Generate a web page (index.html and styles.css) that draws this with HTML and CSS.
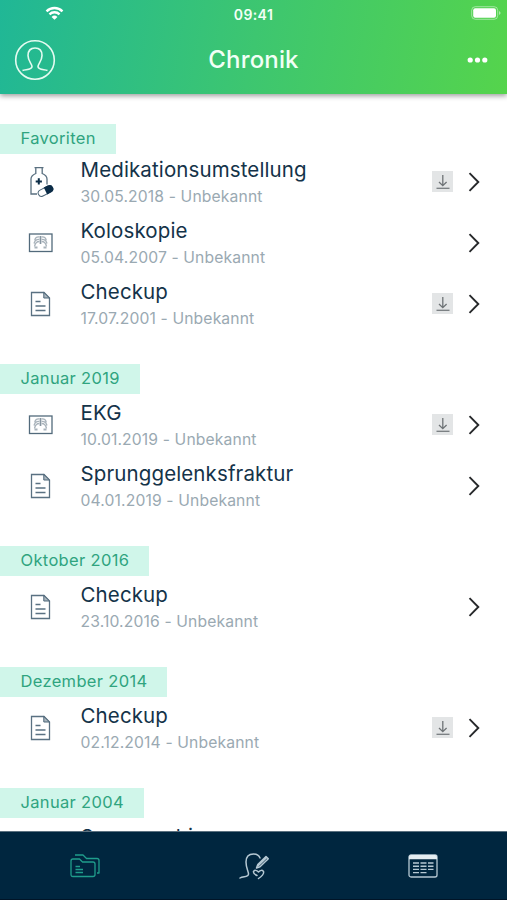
FILE: index.html
```
<!DOCTYPE html>
<html lang="de">
<head>
<meta charset="utf-8">
<title>Chronik</title>
<link rel="stylesheet" href="styles.css">
</head>
<body>
<svg class="defs" width="0" height="0" aria-hidden="true">
  <symbol id="doc" viewBox="0 0 28 32">
    <path d="M5.500 4.500H18L23.500 10V27.500H5.500Z M9.500 13.500H14.500 M9.500 18H19.500 M9.500 22.500H19.500" fill="none" stroke="#5a7182" stroke-width="1.300"/>
    <path d="M17.800 4.500V10H23.500Z" fill="#aab6be" stroke="#4d6678"/>
  </symbol>
  <symbol id="xray" viewBox="0 0 28 32">
    <rect x="3.500" y="7" width="22.500" height="17.500" fill="none" stroke="#526a7b" stroke-width="1.300"/>
    <path d="M13.300 10Q9.500 9.500 8.700 13.500M13.300 12.300Q9 12 8 16.500M13.300 14.500Q9.500 14.500 8.500 19.500M15.700 10Q19.500 9.500 20.300 13.500M15.700 12.300Q20 12 21 16.500M15.700 14.500Q19.500 14.500 20.500 19.500" fill="none" stroke="#a9b3bb" stroke-width="1.300"/>
    <path d="M14.500 9V17" stroke="#8796a1" stroke-width="1.700"/>
    <path d="M8.500 20.500h3M17.500 20.500h3" stroke="#a9b3bb" stroke-width="2.200"/>
  </symbol>
  <symbol id="meds" viewBox="0 0 28 32">
    <path d="M8.500 1.700H17.500M9.800 1.700V7.500Q5 9.500 5 13V28H11M16.200 1.700V7.500Q21 9.500 21 13V18.500" fill="none" stroke="#5a7080" stroke-width="1.300"/>
    <path d="M12.800 12.300v6.200M9.700 15.400h6.200" stroke="#0b2c47" stroke-width="2"/>
    <g transform="rotate(-27 19.500 25)">
      <rect x="11.700" y="21.700" width="15.600" height="6.600" rx="3.300" fill="#fff" stroke="#4d6678"/>
      <path d="M19.500 21.200H24a3.800 3.800 0 0 1 0 7.600H19.500Z" fill="#0b2c47"/>
    </g>
  </symbol>
  <symbol id="save" viewBox="0 0 21 21">
    <rect width="21" height="21" fill="#e3e5e6"/>
    <path d="M10.800 4V14.500M7 11L10.800 14.700L14.600 11" fill="none" stroke="#6e7376" stroke-width="1.300"/>
    <path d="M4.500 17.300H17.500" stroke="#777c7f" stroke-width="1.300"/>
  </symbol>
  <symbol id="chev" viewBox="0 0 12 20">
    <path d="M1.500 1.200L10.300 10L1.500 18.800" fill="none" stroke="#26282a" stroke-width="1.900"/>
  </symbol>
</svg>

<div class="app">
  <header class="header">
    <div class="status">
      <svg class="wifi" viewBox="0 0 20 15"><path d="M1.600 5.200A12 12 0 0 1 18.400 5.200M4.700 8.400A7.600 7.600 0 0 1 15.300 8.400" fill="none" stroke="#fff" stroke-width="2.500"/><path d="M10 14.200L6.900 11.100A4.500 4.500 0 0 1 13.100 11.100Z" fill="#fff"/></svg>
      <span class="clock">09:41</span>
      <svg class="battery" viewBox="0 0 30 14"><rect x=".7" y=".7" width="26" height="12.600" rx="3.600" fill="none" stroke="#fff" stroke-opacity=".45"/><rect x="2.200" y="2.300" width="22.800" height="9.400" rx="2" fill="#fff"/><path d="M28 5v4q1.600-.8 1.600-2t-1.600-2Z" fill="#fff" fill-opacity=".5"/></svg>
    </div>
    <div class="titlebar">
      <svg class="profile" viewBox="0 0 42 42"><circle cx="21" cy="21" r="19.300" fill="none" stroke="#e4fbf1" stroke-width="1.600"/><path d="M8.500 31.500C12 30.300 18 31 18 27.500C18 25 14 22 14 16.500C14 11.500 17 9 21 9S28 11.500 28 16.500C28 22 24 25 24 27.500C24 31 30 30.300 33.500 31.500" fill="none" stroke="#e4fbf1" stroke-width="1.600"/></svg>
      <h1 class="title">Chronik</h1>
      <svg class="more" viewBox="0 0 20 6"><g fill="#fff"><circle cx="2.700" cy="3" r="2.600"/><circle cx="10" cy="3" r="2.600"/><circle cx="17.300" cy="3" r="2.600"/></g></svg>
    </div>
  </header>

  <main class="list">
    <section class="group favorites">
      <h2 class="label">Favoriten</h2>
      <div class="row"><svg class="kind"><use href="#meds"/></svg><div class="text"><div class="name">Medikationsumstellung</div><div class="meta">30.05.2018 - Unbekannt</div></div><svg class="save"><use href="#save"/></svg><svg class="chev"><use href="#chev"/></svg></div>
      <div class="row"><svg class="kind"><use href="#xray"/></svg><div class="text"><div class="name">Koloskopie</div><div class="meta">05.04.2007 - Unbekannt</div></div><svg class="chev"><use href="#chev"/></svg></div>
      <div class="row"><svg class="kind"><use href="#doc"/></svg><div class="text"><div class="name">Checkup</div><div class="meta">17.07.2001 - Unbekannt</div></div><svg class="save"><use href="#save"/></svg><svg class="chev"><use href="#chev"/></svg></div>
    </section>
    <section class="group">
      <h2 class="label">Januar 2019</h2>
      <div class="row"><svg class="kind"><use href="#xray"/></svg><div class="text"><div class="name">EKG</div><div class="meta">10.01.2019 - Unbekannt</div></div><svg class="save"><use href="#save"/></svg><svg class="chev"><use href="#chev"/></svg></div>
      <div class="row"><svg class="kind"><use href="#doc"/></svg><div class="text"><div class="name">Sprunggelenksfraktur</div><div class="meta">04.01.2019 - Unbekannt</div></div><svg class="chev"><use href="#chev"/></svg></div>
    </section>
    <section class="group">
      <h2 class="label">Oktober 2016</h2>
      <div class="row"><svg class="kind"><use href="#doc"/></svg><div class="text"><div class="name">Checkup</div><div class="meta">23.10.2016 - Unbekannt</div></div><svg class="chev"><use href="#chev"/></svg></div>
    </section>
    <section class="group">
      <h2 class="label">Dezember 2014</h2>
      <div class="row"><svg class="kind"><use href="#doc"/></svg><div class="text"><div class="name">Checkup</div><div class="meta">02.12.2014 - Unbekannt</div></div><svg class="save"><use href="#save"/></svg><svg class="chev"><use href="#chev"/></svg></div>
    </section>
    <section class="group">
      <h2 class="label">Januar 2004</h2>
      <div class="row"><div class="kind"></div><div class="text"><div class="name">Sonographie</div></div></div>
    </section>
  </main>

  <nav class="tabs">
    <div class="tab"><svg class="folders" viewBox="0 0 30 24"><g fill="none" stroke="#1f9d8c" stroke-width="1.300" stroke-linejoin="round"><path d="M1 7Q1 5 3 5H9.500L12.500 8H23Q25 8 25 10V20.500Q25 22.500 23 22.500H3Q1 22.500 1 20.500Z"/><path d="M5 1H13L16.500 4.500H27Q29 4.500 29 6.500V19H27"/><path d="M5.500 12.500H10M5.500 15.500H13M5.500 18.500H13"/></g></svg></div>
    <div class="tab"><svg class="person" viewBox="0 0 30 28"><g fill="none" stroke="#b5c8d3" stroke-width="1.500" stroke-linecap="round" stroke-linejoin="round"><path d="M1 26C4 24 9.500 25.500 9.500 22C9.500 19.500 7 16 7 10C7 4.500 10 2 14.500 2C18 2 20 3.500 21 6"/><path d="M17.500 16L18.800 12.500L27 4.500L29.300 6.700L21 14.700ZM19.500 13.500L27.500 5.700"/><path d="M18 23.500Q14 21.500 14.500 19.500Q16.500 17 19.500 20Q22.500 17 24.500 19.500Q25.500 22.500 19.500 26.500"/></g></svg></div>
    <div class="tab"><svg class="calendar" viewBox="0 0 30 24"><rect x="1" y="1" width="28" height="22" rx="2" fill="none" stroke="#b5c8d3" stroke-width="1.300"/><path d="M1 5.300V3Q1 1 3 1H27Q29 1 29 3V5.300Z" fill="#e5edf1"/><path d="M5 9H11M12.500 9H18.500M20 9H25.500M5 12.200H11M12.500 12.200H18.500M20 12.200H25.500M5 15.400H11M12.500 15.400H18.500M20 15.400H25.500M5 18.600H11M12.500 18.600H18.500" stroke="#b5c8d3" stroke-width="1.400"/></svg></div>
  </nav>
</div>
</body>
</html>
```
FILE: styles.css
```
* { box-sizing: border-box; }
body { margin: 0; background: #fff; font-family: Inter, "Liberation Sans", sans-serif; }
svg { display: block; flex: none; }
.defs { position: absolute; }
.app { width: 507px; height: 900px; display: flex; flex-direction: column; overflow: hidden; }

.header {
  flex: none; height: 94px; color: #f2fff6; position: relative;
  background: linear-gradient(100deg, #20b796 0%, #3dc670 50%, #55d44c 100%);
  box-shadow: 0 2px 5px rgba(0, 0, 0, .38);
}
.status { display: grid; grid-template-columns: 1fr auto 1fr; align-items: center; height: 26px; padding: 0 6px 0 45px; }
.wifi { width: 19px; height: 15px; }
.clock { font-size: 14px; font-weight: 600; letter-spacing: .4px; margin: 2px 0 0 -39px; }
.battery { width: 30px; height: 14px; justify-self: end; }
.titlebar { display: grid; grid-template-columns: 1fr auto 1fr; align-items: center; height: 67px; padding: 0 14px; }
.profile { width: 42px; height: 42px; }
.title { margin: 0; font-size: 24px; font-weight: 500; letter-spacing: .15px; }
.more { width: 21px; height: 6px; justify-self: end; margin-right: 5px; }

.list { flex: 1; min-height: 0; overflow: hidden; padding-top: 30px; }
.group { margin-bottom: 30px; }
.label {
  display: block; width: fit-content; height: 30px; margin: 0; padding: 0 20px 0 20.5px;
  background: #d0f6ea; color: #2fa47f; font-size: 16.5px; font-weight: 400; line-height: 29px; letter-spacing: .33px;
}
.favorites .label { margin-bottom: -3px; }
.row { display: flex; align-items: center; height: 61px; padding: 0 27px 0 26px; }
.kind { width: 28px; height: 32px; flex: none; }
.text { flex: 1; padding-left: 26.5px; align-self: flex-start; white-space: nowrap; }
.name { height: 26px; margin-top: 6px; line-height: 26px; font-size: 20.5px; letter-spacing: .12px; color: #143349; }
.meta { height: 24px; line-height: 27px; font-size: 15.7px; letter-spacing: .13px; color: #9aa9b2; }
.save { width: 21px; height: 21px; margin-right: 15px; }
.chev { width: 12px; height: 20px; }

.tabs { flex: none; height: 69px; background: #00263f; display: grid; grid-template-columns: repeat(3, 1fr); border-top: 1px solid #5b7180; border-bottom: 1px solid #001427; }
.tab { display: flex; justify-content: center; align-items: center; }
.folders, .calendar { width: 30px; height: 24px; }
.person { width: 30px; height: 28px; }
```
